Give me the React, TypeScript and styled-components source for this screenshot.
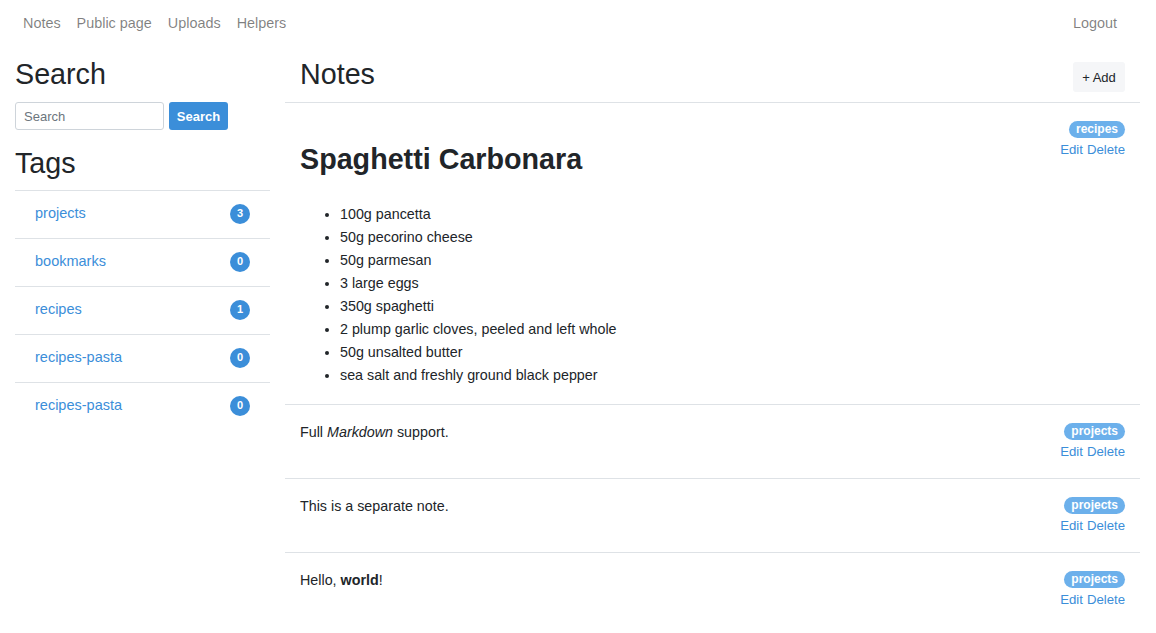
import React from "react";
import styled, { createGlobalStyle } from "styled-components";

const Global = createGlobalStyle`
  * { box-sizing: border-box; }
  body {
    margin: 0;
    font-family: "Liberation Sans", Arial, Helvetica, sans-serif;
    font-size: 14px;
    color: #212529;
    background: #fff;
  }
`;

const Nav = styled.nav`
  display: flex;
  align-items: center;
  padding: 8px 15px 8px 15px;
  height: 46px;
`;

const NavGroup = styled.div<{ $right?: boolean }>`
  display: flex;
  margin-left: ${(p) => (p.$right ? "auto" : "0")};
  margin-right: ${(p) => (p.$right ? "16px" : "0")};
`;

const NavLink = styled.a`
  padding: 5px 8px;
  line-height: 20px;
  font-size: 14.4px;
  color: rgba(0, 0, 0, 0.5);
  text-decoration: none;
`;

const Layout = styled.div`
  display: grid;
  grid-template-columns: 255px 1fr;
  column-gap: 15px;
  padding: 0 16px 0 15px;
  margin-top: 11px;
`;

const Sidebar = styled.aside`
  display: flex;
  flex-direction: column;
`;

const Heading = styled.h2`
  margin: 0;
  font-size: 28.7px;
  font-weight: 400;
  line-height: 34px;
  color: #212529;
`;

const SearchForm = styled.form`
  display: flex;
  gap: 5px;
  margin: 11px 0 16px;
`;

const SearchInput = styled.input`
  width: 149px;
  height: 28px;
  border: 1px solid #ced4da;
  border-radius: 3px;
  padding: 0 8px;
  font-family: inherit;
  font-size: 13px;
  color: #495057;
  &::placeholder { color: #6c757d; }
`;

const PrimaryButton = styled.button`
  height: 28px;
  width: 59px;
  border: none;
  border-radius: 3px;
  background: #3b8ed9;
  color: #fff;
  font-family: inherit;
  font-size: 13px;
  font-weight: 700;
  padding: 0;
`;

const TagList = styled.ul`
  list-style: none;
  margin: 10px 0 0;
  padding: 0;
`;

const TagRow = styled.li`
  display: flex;
  align-items: center;
  justify-content: space-between;
  border-top: 1px solid #dee2e6;
  padding: 12px 20px 14px;
  line-height: 21px;
`;

const TagLink = styled.a`
  color: #3b8ed9;
  text-decoration: none;
  font-size: 14.5px;
`;

const CountBadge = styled.span`
  display: inline-flex;
  align-items: center;
  justify-content: center;
  width: 20px;
  height: 20px;
  border-radius: 50%;
  background: #3b8ed9;
  color: #fff;
  font-size: 11px;
  font-weight: 700;
`;

const Main = styled.main`
  display: flex;
  flex-direction: column;
`;

const MainHeader = styled.div`
  display: flex;
  align-items: flex-start;
  justify-content: space-between;
  padding: 0 15px 10px;
  border-bottom: 1px solid #dee2e6;
`;

const AddButton = styled.button`
  margin-top: 5px;
  height: 30px;
  width: 52px;
  border: none;
  border-radius: 3px;
  background: #f5f6f8;
  color: #212529;
  font-family: inherit;
  font-size: 13px;
  padding: 0;
`;

const Note = styled.article`
  display: flex;
  justify-content: space-between;
  align-items: flex-start;
  padding: 18px 15px 16px;
  border-bottom: 1px solid #dee2e6;
  &:last-child { border-bottom: none; }
`;

const NoteBody = styled.div`
  line-height: 20px;
  margin-top: -1px;
  font-size: 14.3px;
`;

const NoteText = styled.p`
  margin: 0;
`;

const NoteTitle = styled.h1`
  margin: 22px 0 27px;
  font-size: 28.7px;
  font-weight: 700;
  line-height: 34px;
`;

const Ingredients = styled.ul`
  margin: 0 0 1px;
  padding-left: 40px;
  li { line-height: 23px; }
`;

const Meta = styled.div`
  display: flex;
  flex-direction: column;
  align-items: flex-end;
  gap: 2px;
`;

const TagPill = styled.span`
  display: inline-block;
  height: 17px;
  line-height: 17px;
  padding: 0 7px;
  border-radius: 9px;
  background: #6cb0eb;
  color: #fff;
  font-size: 12px;
  font-weight: 700;
`;

const Actions = styled.div`
  display: flex;
  gap: 4px;
  line-height: 20px;
  font-size: 13.2px;
`;

const ActionLink = styled.a`
  color: #3b8ed9;
  text-decoration: none;
`;

const tags = [
  { name: "projects", count: 3 },
  { name: "bookmarks", count: 0 },
  { name: "recipes", count: 1 },
  { name: "recipes-pasta", count: 0 },
  { name: "recipes-pasta", count: 0 },
];

const ingredients = [
  "100g pancetta",
  "50g pecorino cheese",
  "50g parmesan",
  "3 large eggs",
  "350g spaghetti",
  "2 plump garlic cloves, peeled and left whole",
  "50g unsalted butter",
  "sea salt and freshly ground black pepper",
];

const NoteMeta = ({ tag }: { tag: string }) => (
  <Meta>
    <TagPill>{tag}</TagPill>
    <Actions>
      <ActionLink href="#">Edit</ActionLink>
      <ActionLink href="#">Delete</ActionLink>
    </Actions>
  </Meta>
);

export default function App() {
  return (
    <>
      <Global />
      <Nav>
        <NavGroup>
          <NavLink href="#">Notes</NavLink>
          <NavLink href="#">Public page</NavLink>
          <NavLink href="#">Uploads</NavLink>
          <NavLink href="#">Helpers</NavLink>
        </NavGroup>
        <NavGroup $right>
          <NavLink href="#">Logout</NavLink>
        </NavGroup>
      </Nav>
      <Layout>
        <Sidebar>
          <Heading>Search</Heading>
          <SearchForm onSubmit={(e) => e.preventDefault()}>
            <SearchInput placeholder="Search" />
            <PrimaryButton type="submit">Search</PrimaryButton>
          </SearchForm>
          <Heading>Tags</Heading>
          <TagList>
            {tags.map((t, i) => (
              <TagRow key={i}>
                <TagLink href="#">{t.name}</TagLink>
                <CountBadge>{t.count}</CountBadge>
              </TagRow>
            ))}
          </TagList>
        </Sidebar>
        <Main>
          <MainHeader>
            <Heading>Notes</Heading>
            <AddButton>+ Add</AddButton>
          </MainHeader>
          <Note>
            <NoteBody>
              <NoteTitle>Spaghetti Carbonara</NoteTitle>
              <Ingredients>
                {ingredients.map((x) => (
                  <li key={x}>{x}</li>
                ))}
              </Ingredients>
            </NoteBody>
            <NoteMeta tag="recipes" />
          </Note>
          <Note>
            <NoteBody>
              <NoteText>
                Full <em>Markdown</em> support.
              </NoteText>
            </NoteBody>
            <NoteMeta tag="projects" />
          </Note>
          <Note>
            <NoteBody>
              <NoteText>This is a separate note.</NoteText>
            </NoteBody>
            <NoteMeta tag="projects" />
          </Note>
          <Note>
            <NoteBody>
              <NoteText>
                Hello, <strong>world</strong>!
              </NoteText>
            </NoteBody>
            <NoteMeta tag="projects" />
          </Note>
        </Main>
      </Layout>
    </>
  );
}
